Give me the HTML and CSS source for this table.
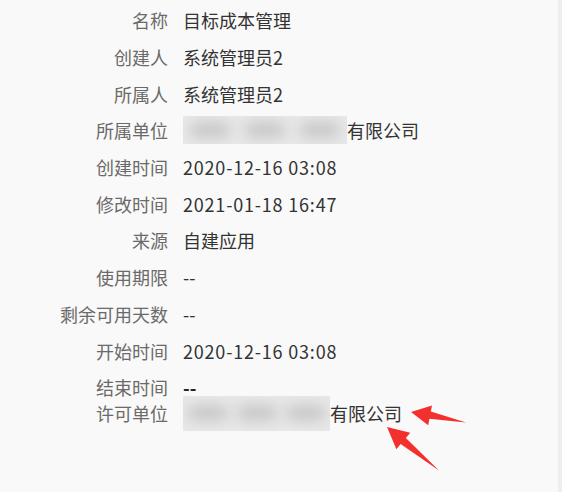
FILE: index.html
```html
<!DOCTYPE html>
<html lang="zh-CN">
<head>
    <meta charset="UTF-8">
    <title>应用详情</title>
    <link rel="stylesheet" href="styles.css">
</head>
<body>
<div class="page">
    <div class="info-list">
        <span class="label">名称</span><span class="value">目标成本管理</span>
        <span class="label">创建人</span><span class="value">系统管理员2</span>
        <span class="label">所属人</span><span class="value">系统管理员2</span>
        <span class="label">所属单位</span>
        <span class="value"><span class="mask mask-owner"><i></i><i></i><i></i></span>有限公司</span>
        <span class="label">创建时间</span><span class="value num">2020-12-16 03:08</span>
        <span class="label">修改时间</span><span class="value num">2021-01-18 16:47</span>
        <span class="label">来源</span><span class="value">自建应用</span>
        <span class="label">使用期限</span><span class="value">--</span>
        <span class="label">剩余可用天数</span><span class="value">--</span>
        <span class="label">开始时间</span><span class="value num">2020-12-16 03:08</span>
        <span class="label">结束时间</span><span class="value strong">--</span>
        <span class="label last">许可单位</span>
        <span class="value last"><span class="mask mask-license"><i></i><i></i><i></i></span>有限公司</span>
    </div>

    <svg class="arrows" width="562" height="492" viewBox="0 0 562 492">
        <polygon points="411,412 432,405.5 430.8,411.6 466,422.5 429.4,418.8 428.2,425.2"/>
        <polygon points="387,427 410.2,432.8 405.9,437.9 439,470.5 400.6,444 396.4,449.2"/>
    </svg>
</div>
</body>
</html>
```

FILE: styles.css
```css
html, body {
    margin: 0;
    padding: 0;
}

body {
    background: #f9f9f9;
    font-family: "Noto Sans CJK SC", "Noto Sans", sans-serif;
    font-size: 18px;
}

.page {
    position: relative;
    width: 558px;
    height: 492px;
    border-right: 4px solid #eeeeee;
}

.info-list {
    padding-top: 2px;
    display: grid;
    grid-template-columns: 168px 1fr;
    column-gap: 15px;
    grid-auto-rows: 36.7px;
    align-items: center;
}

.label {
    justify-self: end;
    color: #6a6a6a;
    white-space: nowrap;
}

.value {
    color: #333333;
    display: flex;
    align-items: center;
    white-space: nowrap;
}

.value.num {
    letter-spacing: 0.8px;
}

.value.strong {
    color: #222222;
    font-weight: bold;
}

.last {
    margin-top: -21px;
}

.mask {
    display: flex;
    align-items: center;
    justify-content: space-around;
    background: #e8e8e8;
    overflow: hidden;
}

.mask i {
    display: block;
    width: 40px;
    height: 14px;
    background: #c4c4c4;
    border-radius: 7px;
    filter: blur(7px);
}

.mask-owner {
    width: 164px;
    height: 28px;
}

.mask-license {
    width: 147px;
    height: 35px;
}

.arrows {
    position: absolute;
    top: 0;
    left: 0;
    pointer-events: none;
}

.arrows polygon {
    fill: #f2302e;
}
```
